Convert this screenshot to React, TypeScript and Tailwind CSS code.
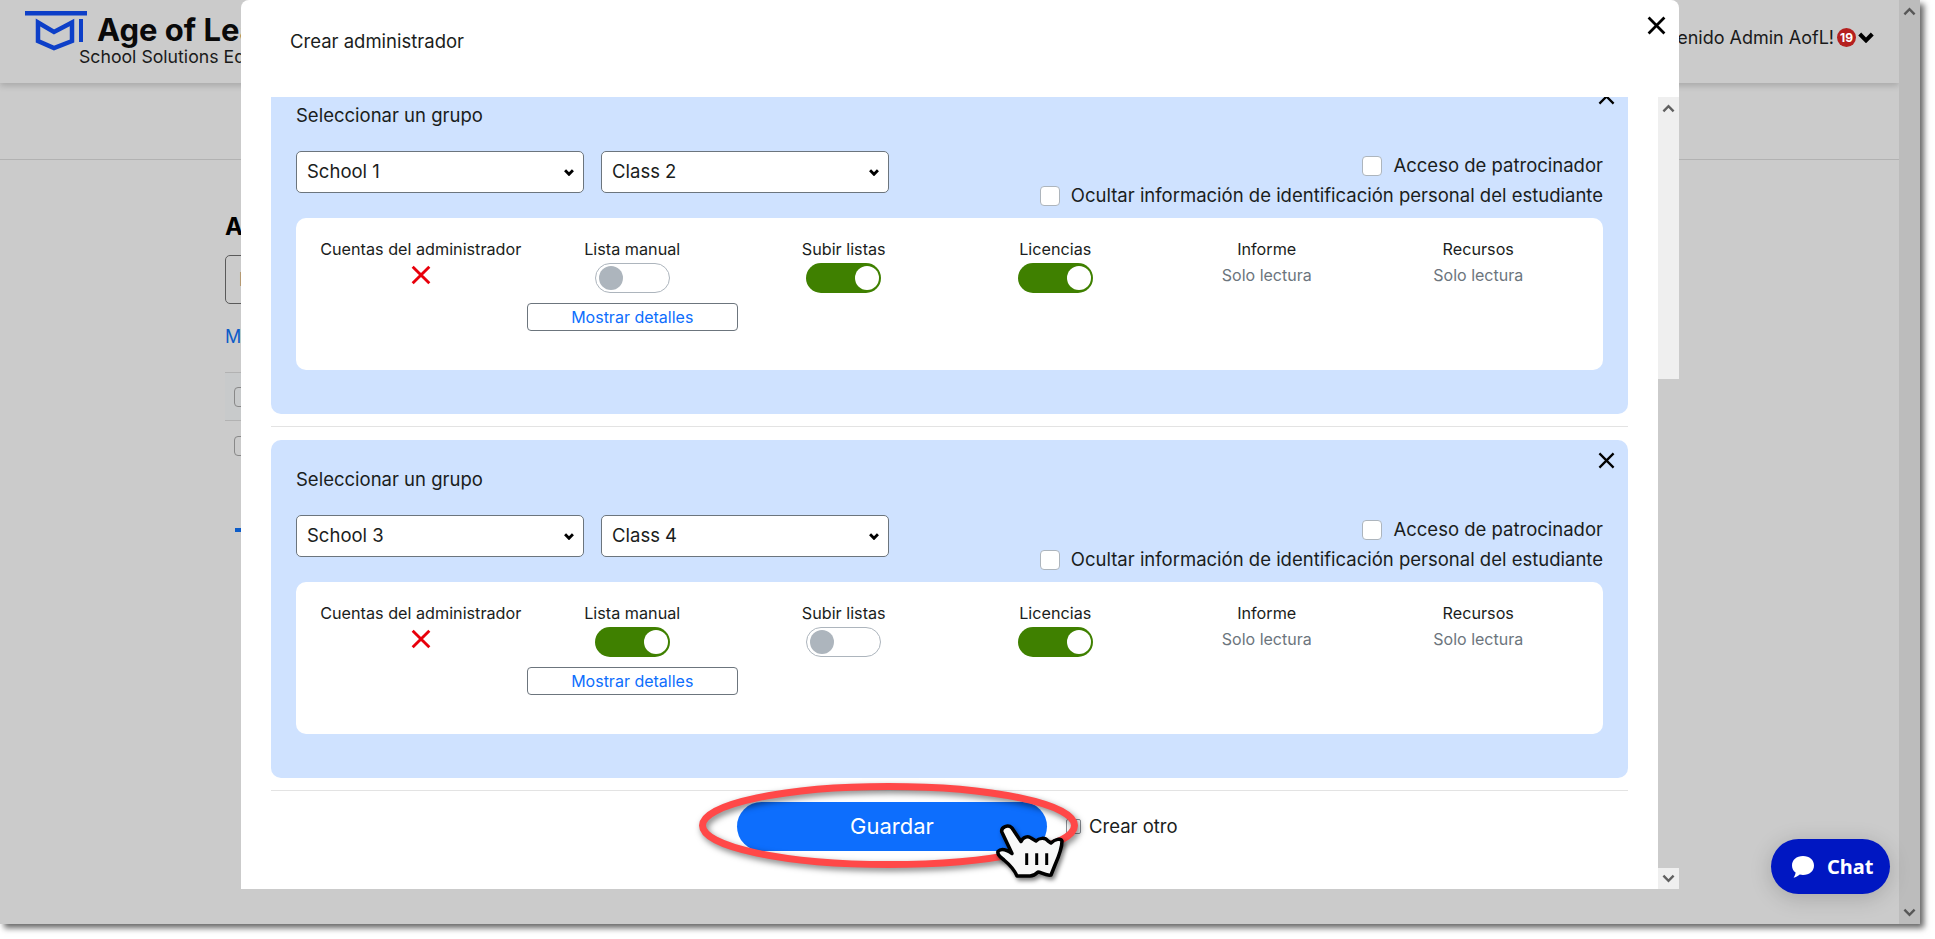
import React from "react";

const Chevron = ({ down = true, className = "", width = 2.6 }: { down?: boolean; className?: string; width?: number }) => (
  <svg viewBox="0 0 14 9" className={className} fill="none" stroke="currentColor" strokeWidth={width} strokeLinejoin="miter">
    <path d={down ? "M1.5 1.5 L7 7 L12.5 1.5" : "M1.5 7.5 L7 2 L12.5 7.5"} />
  </svg>
);

const CloseX = ({ className = "", width = 2.4 }: { className?: string; width?: number }) => (
  <svg viewBox="0 0 18 18" className={className} fill="none" stroke="currentColor" strokeWidth={width}>
    <path d="M1.5 1.5 L16.5 16.5 M16.5 1.5 L1.5 16.5" />
  </svg>
);

const Toggle = ({ on }: { on: boolean }) =>
  on ? (
    <div className="w-[75px] h-[30px] rounded-full bg-[#3f8000] flex items-center justify-end pr-[2px]">
      <div className="w-[24px] h-[24px] rounded-full bg-white" />
    </div>
  ) : (
    <div className="w-[75px] h-[30px] rounded-full bg-white border border-[#adb5bd] flex items-center justify-start pl-[3px]">
      <div className="w-[24px] h-[24px] rounded-full bg-[#adb5bd]" />
    </div>
  );

const Select = ({ value }: { value: string }) => (
  <div className="w-[288px] h-[42px] rounded-[5px] bg-white border border-[#6c757d] flex items-center justify-between pl-[10px] pr-[9px] text-[18.5px] text-[#1a1d20]">
    <span>{value}</span>
    <Chevron className="w-[10px] h-[7px] text-black" width={4} />
  </div>
);

const Checkbox = ({ label }: { label: string }) => (
  <div className="h-[30px] flex items-center justify-end gap-[11px] text-[18.5px] text-[#1a1d20]">
    <div className="w-[20px] h-[20px] rounded-[4px] bg-white border border-[#adb5bd]" />
    <span>{label}</span>
  </div>
);

const Label = ({ children }: { children: React.ReactNode }) => (
  <div className="text-[16.2px] leading-[24px] text-[#1a1d20] whitespace-nowrap">{children}</div>
);

const ReadOnly = ({ title }: { title: string }) => (
  <div className="flex flex-col items-center">
    <Label>{title}</Label>
    <div className="mt-[2px] text-[16px] leading-[24px] text-[#6c757d]">Solo lectura</div>
  </div>
);

const ToggleCol = ({ title, on, details }: { title: string; on: boolean; details?: boolean }) => (
  <div className="flex flex-col items-center">
    <Label>{title}</Label>
    <div className="mt-[2px]">
      <Toggle on={on} />
    </div>
    {details && (
      <div className="mt-[10px] w-full h-[28px] rounded-[4px] border border-[#6c757d] flex items-center justify-center text-[16px] text-[#0d6efd]">
        Mostrar detalles
      </div>
    )}
  </div>
);

const GroupCard = ({
  a,
  b,
  manual,
  upload,
}: {
  a: string;
  b: string;
  manual: boolean;
  upload: boolean;
}) => (
  <div className="relative rounded-[10px] bg-[#cfe2ff] px-[25px] pt-[26px] pb-[44px]">
    <div className="absolute right-[13px] top-[12px] text-black">
      <CloseX className="w-[17px] h-[17px]" />
    </div>
    <div className="text-[18.5px] leading-[27px] text-[#1a1d20]">Seleccionar un grupo</div>
    <div className="mt-[22px] h-[67px] flex items-start justify-between">
      <div className="flex gap-[17px]">
        <Select value={a} />
        <Select value={b} />
      </div>
      <div className="flex flex-col items-end">
        <Checkbox label="Acceso de patrocinador" />
        <Checkbox label="Ocultar información de identificación personal del estudiante" />
      </div>
    </div>
    <div className="h-[152px] rounded-[10px] bg-white px-[19px] pt-[19px] grid grid-cols-6 items-start">
      <div className="flex flex-col items-center">
        <Label>Cuentas del administrador</Label>
        <CloseX className="mt-[4px] w-[20px] h-[20px] text-[#e8000b]" width={2.6} />
      </div>
      <ToggleCol title="Lista manual" on={manual} details />
      <ToggleCol title="Subir listas" on={upload} />
      <ToggleCol title="Licencias" on />
      <ReadOnly title="Informe" />
      <ReadOnly title="Recursos" />
    </div>
  </div>
);

const Divider = () => <div className="mt-[12px] mb-[13px] h-px bg-[#e3e3e3]" />;

export default function App() {
  return (
    <div className="relative w-[1935px] h-[939px] bg-white overflow-hidden font-['Inter',sans-serif]">
      {/* browser window */}
      <div className="relative w-[1920px] h-[924px] bg-[#cbcbcb] flex shadow-[4px_4px_6px_rgba(0,0,0,0.6)]">
        <div className="flex-1 flex flex-col overflow-hidden">
          <header className="relative h-[83px] shrink-0 shadow-[0_3px_6px_rgba(0,0,0,0.16)] flex justify-between">
            <div className="flex pl-[25px] pt-[11px]">
              <svg viewBox="0 0 62 40" className="w-[62px] h-[40px] shrink-0 text-[#0d3fc8]" fill="none" stroke="currentColor">
                <path d="M0 2.3 H62" strokeWidth="4.5" />
                <path d="M13 11.5 L29 21 L47 11.5 V30 L29 37 L13 30 Z" strokeWidth="4.5" />
                <path d="M56 8 V31" strokeWidth="4" />
              </svg>
              <div className="-ml-[8px] pt-[1px]">
                <div className="ml-[18px] text-[31px] leading-[36px] font-bold text-[#0a0a0a] whitespace-nowrap">Age of Learning</div>
                <div className="text-[17.7px] leading-[20px] text-[#1a1a1a] whitespace-nowrap -mt-[1px]">School Solutions Edition</div>
              </div>
            </div>
            <div className="flex items-start pt-[27px] pr-[25px] text-[18px] leading-[22px] text-[#1a1a1a]">
              <span className="whitespace-nowrap">Bienvenido Admin AofL!</span>
              <span className="ml-[3px] w-[19px] h-[19px] mt-[1px] rounded-full bg-[#b5201f] text-white text-[12px] font-bold flex items-center justify-center">19</span>
              <Chevron className="ml-[2px] mt-[5px] w-[16px] h-[11px] text-black" width={3.6} />
            </div>
          </header>
          <div className="h-[77px] shrink-0 border-b border-[#b2b2b2]" />
          <div className="pl-[225px] pt-[51px]">
            <div className="text-[24px] leading-[32px] font-bold text-black">Administradores</div>
            <div className="mt-[12px] w-[400px] h-[49px] rounded-[5px] border border-[#5a5a5a] flex items-center pl-[13px] text-[18px] text-[#5a5a5a]">Buscar</div>
            <div className="mt-[20px] text-[18px] leading-[26px] text-[#0d5cc8]">Mostrar</div>
            <div className="mt-[22px] w-[600px] h-[49px] bg-[#c8cacb] border-y border-[#b2b2b2] flex items-center pl-[9px]">
              <div className="w-[20px] h-[20px] rounded-[4px] border border-[#888]" />
            </div>
            <div className="h-[50px] flex items-center pl-[9px]">
              <div className="w-[20px] h-[20px] rounded-[4px] border border-[#888]" />
            </div>
            <div className="mt-[57px] ml-[10px] w-[20px] h-[4px] bg-[#0d5cc8]" />
          </div>
        </div>
        <div className="w-[21px] shrink-0 bg-[#bcbcbc] flex flex-col items-center justify-between py-[7px] text-[#575757]">
          <Chevron down={false} className="w-[13px] h-[9px]" />
          <Chevron className="w-[13px] h-[9px]" />
        </div>
      </div>

      {/* modal */}
      <div className="absolute left-[241px] top-0 w-[1438px] h-[889px] flex flex-col">
        <div className="h-[97px] shrink-0 bg-white rounded-t-[8px] flex items-start justify-between pl-[49px] pr-[13px]">
          <div className="mt-[28px] text-[18.5px] leading-[27px] text-[#1a1d20]">Crear administrador</div>
          <CloseX className="mt-[16px] w-[19px] h-[19px] text-black" width={2.6} />
        </div>
        <div className="flex-1 flex min-h-0">
          <div className="w-[1417px] bg-white flex flex-col">
            <div className="h-[705px] shrink-0 overflow-hidden px-[30px]">
              <div className="-mt-[21px]">
                <GroupCard a="School 1" b="Class 2" manual={false} upload />
                <Divider />
                <GroupCard a="School 3" b="Class 4" manual upload={false} />
                <Divider />
              </div>
            </div>
            <div className="flex items-start pl-[496px]">
              <div className="w-[310px] h-[49px] rounded-full bg-[#0d6efd] text-white text-[22px] flex items-center justify-center">Guardar</div>
              <div className="ml-[19px] mt-[17px] w-[15px] h-[15px] rounded-[2px] border border-[#8a8f96]" />
              <div className="ml-[8px] mt-[11px] text-[18.5px] leading-[27px] text-[#1a1d20]">Crear otro</div>
            </div>
          </div>
          <div className="w-[21px] flex flex-col justify-between">
            <div className="h-[282px] bg-[#efefef] flex justify-center pt-[7px] text-[#606060]">
              <Chevron down={false} className="w-[13px] h-[9px]" />
            </div>
            <div className="h-[21px] bg-[#efefef] flex justify-center items-center text-[#606060]">
              <Chevron className="w-[13px] h-[9px]" />
            </div>
          </div>
        </div>
      </div>

      {/* annotation ellipse */}
      <svg className="absolute left-[690px] top-[775px] drop-shadow-[2px_3px_3px_rgba(0,0,0,0.5)]" width="400" height="105" viewBox="0 0 400 105" fill="none">
        <ellipse cx="198.5" cy="50.5" rx="186" ry="39" stroke="#ff4848" strokeWidth="7" />
      </svg>

      {/* hand cursor */}
      <svg className="absolute left-[990px] top-[820px] drop-shadow-[2px_3px_2px_rgba(0,0,0,0.5)]" width="80" height="64" viewBox="0 0 80 64" fill="none">
        <path
          d="M11.7 11.7 C11 7 18 4 22 8 L31 21.5 C33 17 38 15.5 41 18 L46 21 C49 18 55 17 58 21 L61 23 C65 19 71 18 72 21 C72 27 69 36 65 45 L61 55 C55 56 51 52 48 52 C46 54 42 56 40 56 L27 56 C24 49 20 45 14 40 C10 37 7 34 8 31.5 C11 28 17 30 22 33.5 Z"
          fill="#f8f8f8"
          stroke="#000"
          strokeWidth="3.5"
          strokeLinejoin="round"
        />
        <path d="M36.7 33.3 V45 M46.7 33.3 V45 M56.7 33.3 V45" stroke="#000" strokeWidth="3" />
      </svg>

      {/* chat */}
      <div className="absolute left-[1771px] top-[839px] w-[119px] h-[55px] rounded-full bg-[#0017c2] shadow-[0_4px_22px_rgba(0,0,0,0.18)] flex items-center pl-[20px] gap-[12px] text-white">
        <svg viewBox="0 0 24 24" className="w-[24px] h-[24px]" fill="currentColor">
          <path d="M12 1 C18.6 1 23 5 23 10.5 C23 16 18.6 20 12 20 C10.8 20 9.8 19.8 8.8 19.6 C7 21 4.8 22.6 2.6 22.8 C3.6 21.4 4.4 19.6 4.6 17.6 C2.2 16 1 13.4 1 10.5 C1 5 5.4 1 12 1 Z" />
        </svg>
        <span className="text-[20px] font-bold font-['Noto_Sans',sans-serif]">Chat</span>
      </div>
    </div>
  );
}
